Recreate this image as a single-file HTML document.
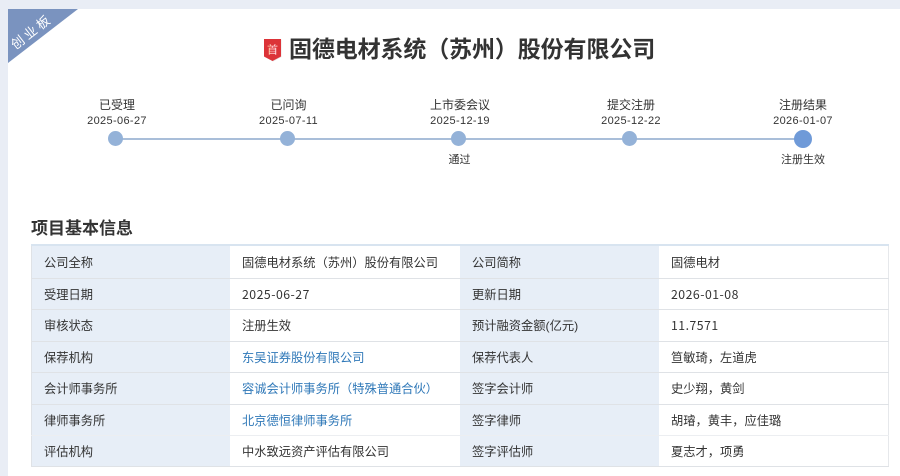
<!DOCTYPE html>
<html lang="zh">
<head>
<meta charset="utf-8">
<style>
html,body{margin:0;padding:0;background:#e9edf5;width:900px;height:476px;overflow:hidden}
body{font-family:"Liberation Sans","Noto Sans CJK SC",sans-serif;color:#333;position:relative}
#w{position:absolute;left:8px;top:9px;width:892px;height:467px;background:#fff}
.a{position:absolute;white-space:nowrap}
.c{transform:translateX(-50%);text-align:center}
.n{font-size:12px;line-height:16px;color:#333}
.d{font-size:11px;line-height:16px;color:#333;letter-spacing:.35px}
.s{font-size:11px;line-height:14px;color:#333}
.dot{position:absolute;top:131px;width:15px;height:15px;border-radius:50%;background:#94b2d8}
.l{position:absolute;left:32px;width:198px;background:#e7eef7}
.l2{position:absolute;left:460px;width:199px;background:#e7eef7}
.t{position:absolute;font-size:12.25px;line-height:16px;white-space:nowrap;color:#333}
.m{font-family:"Noto Sans CJK SC",sans-serif;letter-spacing:.5px;margin-top:-1px}
.b{color:#2f78b8}
.h{position:absolute;left:31px;width:858px;height:1px;background:#dfe2e6}
</style>
</head>
<body>
<div id="w"></div>
<svg class="a" style="left:8px;top:9px" width="71" height="55"><polygon points="0,0 70,0 0,54" fill="#7a93bf"/></svg>
<div class="a" style="left:4px;top:24px;width:56px;text-align:center;font-size:13px;line-height:16px;letter-spacing:3px;color:#fff;transform:rotate(-38deg)">创业板</div>

<svg class="a" style="left:262px;top:38px" width="22" height="26"><defs><linearGradient id="g" x1="0" x2="1" y1="0" y2="0"><stop offset="0" stop-color="#ffe0a0"/><stop offset=".5" stop-color="#ffc0c8"/><stop offset="1" stop-color="#fff"/></linearGradient></defs><path d="M2.500 1.500H19.500V19L11 23.500L2.500 19Z" fill="#e5e5e5"/><path d="M2 1H19V18.500L10.500 23L2 18.500Z" fill="#dc3338"/><text x="10.500" y="15.500" font-size="11" fill="url(#g)" text-anchor="middle" font-family="Noto Sans CJK SC">首</text></svg>
<div class="a" style="left:289px;top:33px;font-size:23px;line-height:32px;font-weight:700;letter-spacing:-.12px;color:#333">固德电材系统（苏州）股份有限公司</div>

<div class="a" style="left:115px;top:138px;width:688px;height:2px;background:#a9bed9"></div>
<div class="dot" style="left:108px"></div>
<div class="dot" style="left:279.500px"></div>
<div class="dot" style="left:451px"></div>
<div class="dot" style="left:622px"></div>
<div class="dot" style="left:794px;top:130px;width:18px;height:18px;background:#6f9ad8"></div>

<div class="a c n" style="left:117px;top:97px">已受理</div><div class="a c d" style="left:117px;top:113px">2025-06-27</div>
<div class="a c n" style="left:288.500px;top:97px">已问询</div><div class="a c d" style="left:288.500px;top:113px">2025-07-11</div>
<div class="a c n" style="left:460px;top:97px">上市委会议</div><div class="a c d" style="left:460px;top:113px">2025-12-19</div>
<div class="a c n" style="left:631px;top:97px">提交注册</div><div class="a c d" style="left:631px;top:113px">2025-12-22</div>
<div class="a c n" style="left:803px;top:97px">注册结果</div><div class="a c d" style="left:803px;top:113px">2026-01-07</div>
<div class="a c s" style="left:459.500px;top:153px">通过</div>
<div class="a c s" style="left:803px;top:153px">注册生效</div>

<div class="a" style="left:31px;top:217px;font-size:17px;line-height:24px;font-weight:700;color:#333">项目基本信息</div>
<div class="a" style="left:31px;top:244px;width:858px;height:2px;background:#d8e4f0"></div>

<div class="l" style="top:246px;height:221px"></div>
<div class="l2" style="top:246px;height:221px"></div>
<div class="a" style="left:31px;top:246px;width:1px;height:221px;background:#dfe2e6"></div>
<div class="a" style="left:888px;top:246px;width:1px;height:221px;background:#e6e8eb"></div>

<div class="h" style="top:278px"></div>
<div class="h" style="top:309px"></div>
<div class="h" style="top:341px"></div>
<div class="h" style="top:372px"></div>
<div class="h" style="top:404px"></div>
<div class="h" style="top:435px;background:#eceef1"></div>
<div class="h" style="top:466px"></div>

<div class="t" style="left:44px;top:255px">公司全称</div><div class="t" style="left:242px;top:255px">固德电材系统（苏州）股份有限公司</div><div class="t" style="left:472px;top:255px">公司简称</div><div class="t" style="left:671px;top:255px">固德电材</div>
<div class="t" style="left:44px;top:287px">受理日期</div><div class="t m" style="left:242px;top:287px">2025-06-27</div><div class="t" style="left:472px;top:287px">更新日期</div><div class="t m" style="left:671px;top:287px">2026-01-08</div>
<div class="t" style="left:44px;top:318px">审核状态</div><div class="t" style="left:242px;top:318px">注册生效</div><div class="t" style="left:472px;top:318px">预计融资金额(亿元)</div><div class="t m" style="left:671px;top:318px">11.7571</div>
<div class="t" style="left:44px;top:350px">保荐机构</div><div class="t b" style="left:242px;top:350px">东吴证券股份有限公司</div><div class="t" style="left:472px;top:350px">保荐代表人</div><div class="t" style="left:671px;top:350px">笪敏琦，左道虎</div>
<div class="t" style="left:44px;top:381px">会计师事务所</div><div class="t b" style="left:242px;top:381px">容诚会计师事务所（特殊普通合伙）</div><div class="t" style="left:472px;top:381px">签字会计师</div><div class="t" style="left:671px;top:381px">史少翔，黄剑</div>
<div class="t" style="left:44px;top:413px">律师事务所</div><div class="t b" style="left:242px;top:413px">北京德恒律师事务所</div><div class="t" style="left:472px;top:413px">签字律师</div><div class="t" style="left:671px;top:413px">胡璿，黄丰，应佳璐</div>
<div class="t" style="left:44px;top:444px">评估机构</div><div class="t" style="left:242px;top:444px">中水致远资产评估有限公司</div><div class="t" style="left:472px;top:444px">签字评估师</div><div class="t" style="left:671px;top:444px">夏志才，项勇</div>
</body>
</html>
